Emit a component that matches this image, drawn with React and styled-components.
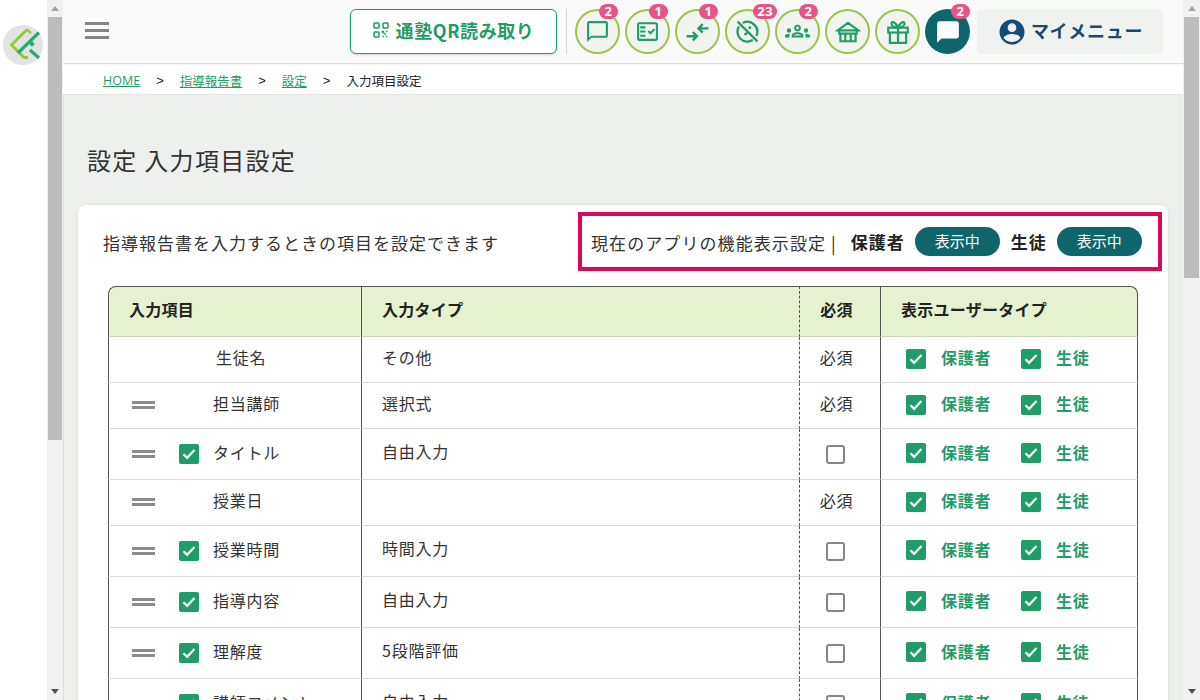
import React from "react";
import styled, { createGlobalStyle } from "styled-components";

const G = "#1f9c68";
const FONT = `"Noto Sans CJK JP", "Noto Sans", sans-serif`;

const Global = createGlobalStyle`
  html, body { margin: 0; padding: 0; height: 100%; overflow: hidden; background: #fff; }
  body { font-family: ${FONT}; color: #222; }
  * { box-sizing: border-box; }
`;

const Page = styled.div`display: flex; width: 1200px; height: 700px; overflow: hidden;`;
const Rail = styled.aside`width: 47px; flex: none; background: #fff; padding: 25px 0 0 3px;`;
const Scroll = styled.div`
  width: ${p => p.$w}px; flex: none; background: #f1f1f1; display: flex; flex-direction: column; align-items: center;
  justify-content: flex-start;
`;
const Arrow = styled.div`
  width: 0; height: 0; flex: none; margin: 6px 0;
  border-left: 4px solid transparent; border-right: 4px solid transparent;
  ${p => p.$down ? "border-top: 5px solid #505050; margin-top: auto;" : "border-bottom: 5px solid #a3a3a3;"}
`;
const Thumb = styled.div`width: calc(100% - 2px); height: ${p => p.$h}px; background: #bcbcbc; flex: none;`;
const Main = styled.main`flex: 1; min-width: 0; height: 700px; overflow: hidden; background: #edf0ec; box-shadow: inset 1px 0 0 #ddd;`;

const Header = styled.header`
  height: 64px; background: #fafafa; border-bottom: 1px solid #dcdcdc; display: flex; align-items: flex-start;
  padding: 9px 20px 0 22px; position: relative; box-shadow: 0 1px 2px rgba(0,0,0,.05);
`;
const Burger = styled.button`
  width: 24px; height: 17px; margin-top: 13px; border: 0; padding: 0; background: none; display: flex; flex-direction: column; justify-content: space-between;
  & > i { display: block; height: 3px; background: #858585; }
`;
const Tools = styled.div`margin-left: auto; display: flex; align-items: flex-start;`;
const QrButton = styled.button`
  width: 207px; height: 45px; border: 1px solid ${G}; border-radius: 6px; background: #fff; color: ${G};
  box-shadow: 0 1px 3px rgba(0,0,0,.15); font: 700 18px ${FONT}; letter-spacing: .6px;
  display: flex; align-items: center; justify-content: center; gap: 7px; padding: 0 0 3px;
`;
const Divider = styled.div`width: 1px; height: 45px; background: #d4d6d3; margin: 0 8px 0 9px;`;
const Circles = styled.div`display: flex; gap: 5px;`;
const Round = styled.button`
  width: 45px; height: 45px; border-radius: 50%; padding: 0; position: relative; display: flex; align-items: center; justify-content: center;
  border: ${p => p.$dark ? "0" : "2px solid #9cc64a"};
  background: ${p => p.$dark ? "#0e666b" : "#f2f4f0"};
`;
const Badge = styled.span`
  position: absolute; top: ${p => p.$dark ? "-5px" : "-7px"}; right: ${p => p.$wide ? "-9px" : "0"}; height: 15px; min-width: 19px; padding: 0 4px; border-radius: 8px;
  background: #e8538a; color: #fff; font: 700 13px/15px "Noto Sans", sans-serif; letter-spacing: .4px; text-align: center;
`;
const MyMenu = styled.button`
  width: 186px; height: 45px; margin-left: 7px; border: 0; border-radius: 6px; background: #eff2ee; color: #1b4a6b;
  font: 700 18px ${FONT}; letter-spacing: .7px; display: flex; align-items: center; justify-content: center; gap: 4px; padding: 0;
`;
const MenuLabel = styled.span`margin-top: -3px;`;

const Crumbs = styled.nav`
  height: 31px; background: #fff; border-bottom: 1px solid #e4e6e3; display: flex; align-items: center; padding: 3px 0 0 40px;
  font-size: 12.5px;
`;
const Crumb = styled.a`color: ${G}; text-decoration: underline; font-family: "Open Sans", ${FONT}; font-size: 12.5px;`;
const Sep = styled.span`margin: 0 16px; font-size: 13px; font-family: "Liberation Sans", sans-serif;`;

const Title = styled.h1`margin: 46px 0 0 24px; font-size: 24px; line-height: 38px; font-weight: 400; letter-spacing: 1.3px; color: #333;`;
const Card = styled.section`margin: 26px 15px 0; background: #fff; border-radius: 8px 8px 0 0; box-shadow: 0 0 4px rgba(0,0,0,.08); padding: 7px 6px 0 25px;`;
const TopRow = styled.div`display: flex; justify-content: space-between; align-items: center; height: 59px;`;
const Lead = styled.p`margin: 1px 0 0; font-size: 17px; letter-spacing: 1px; color: #333;`;
const Notice = styled.div`
  width: 584px; height: 59px; flex: none; border: 4px solid #d8095c; display: flex; align-items: center; padding: 0 17px 0 9px; font-size: 17px; color: #333;
  white-space: nowrap;
  & > * { flex: none; }
`;
const NoticeText = styled.span`letter-spacing: 1.08px; margin-top: 1px;`;
const NoticeBar = styled.span`margin: 1px 15px 0 5px; color: #222;`;
const Strong = styled.b`font-size: 17px; letter-spacing: 1px; color: #222; margin: 0 0 0 ${p => p.$ml || 0}px;`;
const Chip = styled.span`
  width: 85px; height: 29px; border-radius: 15px; background: #0e666b; color: #fff; font-size: 15px; letter-spacing: 0;
  display: flex; align-items: center; justify-content: center; margin-left: 10px; padding-bottom: 2px;
`;

const Table = styled.table`
  width: 1030px; margin: 15px 0 0 5px; border-collapse: separate; border-spacing: 0; table-layout: fixed;
  font-size: 16px; letter-spacing: .75px; color: #333;
`;
const Th = styled.th`
  height: 51px; background: #e6f2cf; font-size: 16px; font-weight: 700; letter-spacing: .25px; color: #222; text-align: ${p => p.$c ? "center" : "left"};
  padding: 0 0 6px 20px; border-top: 1px solid #555; border-bottom: 1px solid #cdd4bd;
  border-left: ${p => p.$dash ? "1px dashed #555" : "1px solid #555"};
  border-right: ${p => p.$last ? "1px solid #555" : "0"};
  ${p => p.$c && "padding-left: 0; padding-right: 7px;"}
  ${p => p.$first && "border-top-left-radius: 8px;"}
  ${p => p.$last && "border-top-right-radius: 8px;"}
`;
const Td = styled.td`
  height: ${p => p.$h}px; padding: 0 0 6px 20px; border-bottom: 1px solid #dcdcdc;
  border-left: ${p => p.$dash ? "1px dashed #555" : "1px solid #555"};
  border-right: ${p => p.$last ? "1px solid #555" : "0"};
  ${p => p.$c && "padding-left: 0; padding-right: 7px; text-align: center;"}
  ${p => p.$plain && "padding-bottom: 3px;"}
  white-space: nowrap;
`;
const ItemCell = styled.div`display: flex; align-items: center; height: 24px; padding-left: 3px;`;
const Handle = styled.span`
  width: 23px; height: 8px; flex: none; border-top: 3px solid #8c8c8c; border-bottom: 3px solid #8c8c8c; margin-right: 24px; margin-top: 2px;
  visibility: ${p => p.$hide ? "hidden" : "visible"};
`;
const CheckSlot = styled.span`display: flex; width: 20px; height: 20px; flex: none; margin-right: 14px; margin-top: 2px;`;
const ItemName = styled.span`margin-left: ${p => p.$ml || 0}px; margin-top: -2px;`;
const Box = styled.span`
  display: inline-flex; align-items: center; justify-content: center; width: 20px; height: 20px; border-radius: 2px; background: ${G}; flex: none; vertical-align: middle;
`;
const Empty = styled.span`display: inline-block; width: 19px; height: 19px; border: 2px solid #85858f; border-radius: 3px; background: #fff; margin: 3px 3px 0 0; vertical-align: middle;`;
const Users = styled.div`display: flex; align-items: center; padding-left: 5px; margin-top: 1px;`;
const UserItem = styled.span`
  display: flex; align-items: center; width: ${p => p.$w}px; color: ${G}; font-weight: 700; font-size: 16px; letter-spacing: .75px;
`;
const UserLabel = styled.span`margin: -3px 0 0 15px;`;

const Check = () => (
  <Box><svg width="14" height="12" viewBox="0 0 14 12"><path d="M1.5 6.2l3.6 3.6L12.5 2" fill="none" stroke="#fff" strokeWidth="2.2" /></svg></Box>
);
const Sv = ({ children, s = 24, c = G }) => <svg width={s} height={s} viewBox="0 0 24 24" fill={c}>{children}</svg>;
const St = { fill: "none", stroke: G, strokeWidth: 2 };

const Logo = () => (
  <svg width="40" height="40" viewBox="0 0 40 40">
    <circle cx="20" cy="20" r="20" fill="#e3e3e3" />
    <path d="M24 4.500 L8.500 20 L21 32.500 L25 32.500" fill="none" stroke="#93c83d" strokeWidth="3" strokeLinejoin="round" />
    <path d="M24 4.500 L28 8" fill="none" stroke="#93c83d" strokeWidth="2.500" />
    <path d="M15 28 L36 7.500" stroke="#2aa876" strokeWidth="3.200" />
    <path d="M27 25 L36 33" stroke="#2aa876" strokeWidth="3.200" />
    <rect x="27" y="17" width="4" height="4" fill="#2aa876" transform="rotate(45 29 19)" />
  </svg>
);

const QrIcon = () => (
  <svg width="16" height="16" viewBox="0 0 16 16" fill="none" stroke={G} strokeWidth="1.500">
    <rect x="1" y="1" width="5" height="5" rx=".8" /><rect x="10" y="1" width="5" height="5" rx=".8" /><rect x="1" y="10" width="5" height="5" rx=".8" />
    <path d="M9.500 9.500h1.600v1.600H9.500zM13 9.500h2M11.500 12h1.500M9.500 14.500h1.600M13 14.500h2" strokeWidth="1.400" strokeDasharray="1.500 1" />
  </svg>
);
const Chat = () => <Sv s={25}><path d="M20 2H4c-1.100 0-2 .9-2 2v18l4-4h14c1.100 0 2-.9 2-2V4c0-1.100-.9-2-2-2zm0 14H6l-2 2V4h16v12z" /></Sv>;
const Fact = () => (
  <Sv s={25}>
    <path fillRule="evenodd" d="M20 3H4c-1.100 0-2 .9-2 2v14c0 1.100.9 2 2 2h16c1.100 0 2-.9 2-2V5c0-1.100-.9-2-2-2zm0 16H4V5h16v14z" />
    <path d="M19.410 10.420L18 9l-3.170 3.170-1.410-1.420L12 12.160 14.830 15zM5 7h5v2H5zM5 11h5v2H5zM5 15h5v2H5z" />
  </Sv>
);
const Arrows = () => (
  <Sv s={25}>
    <g {...St} strokeWidth="2.300">
      <path d="M1.500 16.500H11M7.500 12.500l4 4-4 4" />
      <path d="M22.500 9H13M17 5l-4 4 4 4" />
    </g>
  </Sv>
);
const Off = () => (
  <Sv s={25}>
    <g {...St} strokeWidth="2.200">
      <path d="M7.500 3.800A9.500 9.500 0 0 1 20.500 16.200M17 20.200A9.500 9.500 0 0 1 3.800 7.200" />
      <path d="M2.500 2.500l19 19" />
      <path d="M13.500 9.500l1.500-2.500M9 15l3-1.500" />
    </g>
  </Sv>
);
const Groups = () => (
  <Sv s={25}>
    <path fillRule="evenodd" d="M12 5.500a3.200 3.200 0 1 1 0 6.400 3.200 3.200 0 0 1 0-6.400zm0 1.800a1.400 1.400 0 1 0 0 2.800 1.400 1.400 0 0 0 0-2.800z" />
    <path fillRule="evenodd" d="M12 12.800c3 0 5.600 1.300 5.600 3v1.900H6.400v-1.900c0-1.700 2.600-3 5.600-3zm0 1.800c-1.900 0-3.400.6-3.700 1.300h7.400c-.3-.7-1.800-1.300-3.700-1.300z" />
    <circle cx="3.800" cy="11" r="2.100" /><circle cx="20.200" cy="11" r="2.100" />
    <path d="M0 17.700v-1.500c0-1.200 1.600-2.200 4.800-2-.4.5-.6 1.100-.6 1.700v1.800zM24 17.700v-1.500c0-1.200-1.600-2.200-4.800-2 .4.5.6 1.100.6 1.700v1.800z" />
  </Sv>
);
const Museum = () => (
  <Sv s={26}>
    <g {...St} strokeWidth="2">
      <path d="M2.500 10.500L12 3.500l9.500 7zM4 10.500h16v3H4z" />
      <path d="M5 13.500v7h14v-7M9.500 13.500v7M14.500 13.500v7" />
    </g>
  </Sv>
);
const Gift = () => (
  <Sv s={26}>
    <g {...St} strokeWidth="2">
      <rect x="3" y="8" width="18" height="4.500" />
      <path d="M4.500 12.500V22h15v-9.500M12 8v14" />
      <path d="M12 8C10 3 6.500 1.500 6 4c-.3 2 2 4 6 4zM12 8c2-5 5.500-6.500 6-4 .3 2-2 4-6 4z" />
    </g>
  </Sv>
);
const WhiteChat = () => <Sv s={26} c="#fff"><path d="M20 2H4c-1.100 0-2 .9-2 2v18l4-4h14c1.100 0 2-.9 2-2V4c0-1.100-.9-2-2-2z" /></Sv>;
const UserIcon = () => (
  <svg width="30" height="30" viewBox="0 0 24 24" fill="#154c75">
    <path d="M12 2C6.480 2 2 6.480 2 12s4.480 10 10 10 10-4.480 10-10S17.520 2 12 2zm0 3c1.930 0 3.500 1.570 3.500 3.500S13.930 12 12 12 8.500 10.430 8.500 8.500 10.070 5 12 5zm0 15c-2.700 0-5.100-1.300-6.600-3.300.1-2 4.400-3.200 6.600-3.200s6.500 1.200 6.600 3.200C17.100 18.700 14.700 20 12 20z" />
  </svg>
);

const buttons = [
  { icon: <Chat />, n: "2" }, { icon: <Fact />, n: "1" }, { icon: <Arrows />, n: "1" }, { icon: <Off />, n: "23" },
  { icon: <Groups />, n: "2" }, { icon: <Museum /> }, { icon: <Gift /> }, { icon: <WhiteChat />, n: "2", dark: true },
];

const rows = [
  { name: "生徒名", type: "その他", req: "必須", h: 46, noHandle: true, ml: 3 },
  { name: "担当講師", type: "選択式", req: "必須", h: 46 },
  { name: "タイトル", type: "自由入力", check: true, h: 51 },
  { name: "授業日", type: "", req: "必須", h: 46 },
  { name: "授業時間", type: "時間入力", check: true, h: 51 },
  { name: "指導内容", type: "自由入力", check: true, h: 51 },
  { name: "理解度", type: "5段階評価", check: true, h: 51 },
  { name: "講師コメント", type: "自由入力", check: true, h: 51 },
];

export default function App() {
  return (
    <>
      <Global />
      <Page>
        <Rail><Logo /></Rail>
        <Scroll $w={16}><Arrow /><Thumb $h={423} /><Arrow $down /></Scroll>
        <Main>
          <Header>
            <Burger aria-label="menu"><i /><i /><i /></Burger>
            <Tools>
              <QrButton><QrIcon />通塾QR読み取り</QrButton>
              <Divider />
              <Circles>
                {buttons.map((b, i) => (
                  <Round key={i} $dark={b.dark}>
                    {b.icon}
                    {b.n && <Badge $wide={b.n.length > 1} $dark={b.dark}>{b.n}</Badge>}
                  </Round>
                ))}
              </Circles>
              <MyMenu><UserIcon /><MenuLabel>マイメニュー</MenuLabel></MyMenu>
            </Tools>
          </Header>
          <Crumbs>
            <Crumb>HOME</Crumb><Sep>&gt;</Sep>
            <Crumb>指導報告書</Crumb><Sep>&gt;</Sep>
            <Crumb>設定</Crumb><Sep>&gt;</Sep>
            <span>入力項目設定</span>
          </Crumbs>
          <Title>設定 入力項目設定</Title>
          <Card>
            <TopRow>
              <Lead>指導報告書を入力するときの項目を設定できます</Lead>
              <Notice>
                <NoticeText>現在のアプリの機能表示設定</NoticeText>
                <NoticeBar>|</NoticeBar>
                <Strong>保護者</Strong><Chip>表示中</Chip>
                <Strong $ml={11}>生徒</Strong><Chip>表示中</Chip>
              </Notice>
            </TopRow>
            <Table>
              <colgroup><col width="253" /><col width="438" /><col width="81" /><col width="258" /></colgroup>
              <thead>
                <tr>
                  <Th $first>入力項目</Th>
                  <Th>入力タイプ</Th>
                  <Th $dash $c>必須</Th>
                  <Th $last>表示ユーザータイプ</Th>
                </tr>
              </thead>
              <tbody>
                {rows.map(r => (
                  <tr key={r.name}>
                    <Td $h={r.h} $plain>
                      <ItemCell>
                        <Handle $hide={r.noHandle} />
                        <CheckSlot>{r.check && <Check />}</CheckSlot>
                        <ItemName $ml={r.ml}>{r.name}</ItemName>
                      </ItemCell>
                    </Td>
                    <Td $h={r.h}>{r.type}</Td>
                    <Td $h={r.h} $dash $c>{r.req || <Empty />}</Td>
                    <Td $h={r.h} $last $plain>
                      <Users>
                        <UserItem $w={115}><Check /><UserLabel>保護者</UserLabel></UserItem>
                        <UserItem $w={90}><Check /><UserLabel>生徒</UserLabel></UserItem>
                      </Users>
                    </Td>
                  </tr>
                ))}
              </tbody>
            </Table>
          </Card>
        </Main>
        <Scroll $w={17}><Arrow /><Thumb $h={261} /><Arrow $down /></Scroll>
      </Page>
    </>
  );
}
